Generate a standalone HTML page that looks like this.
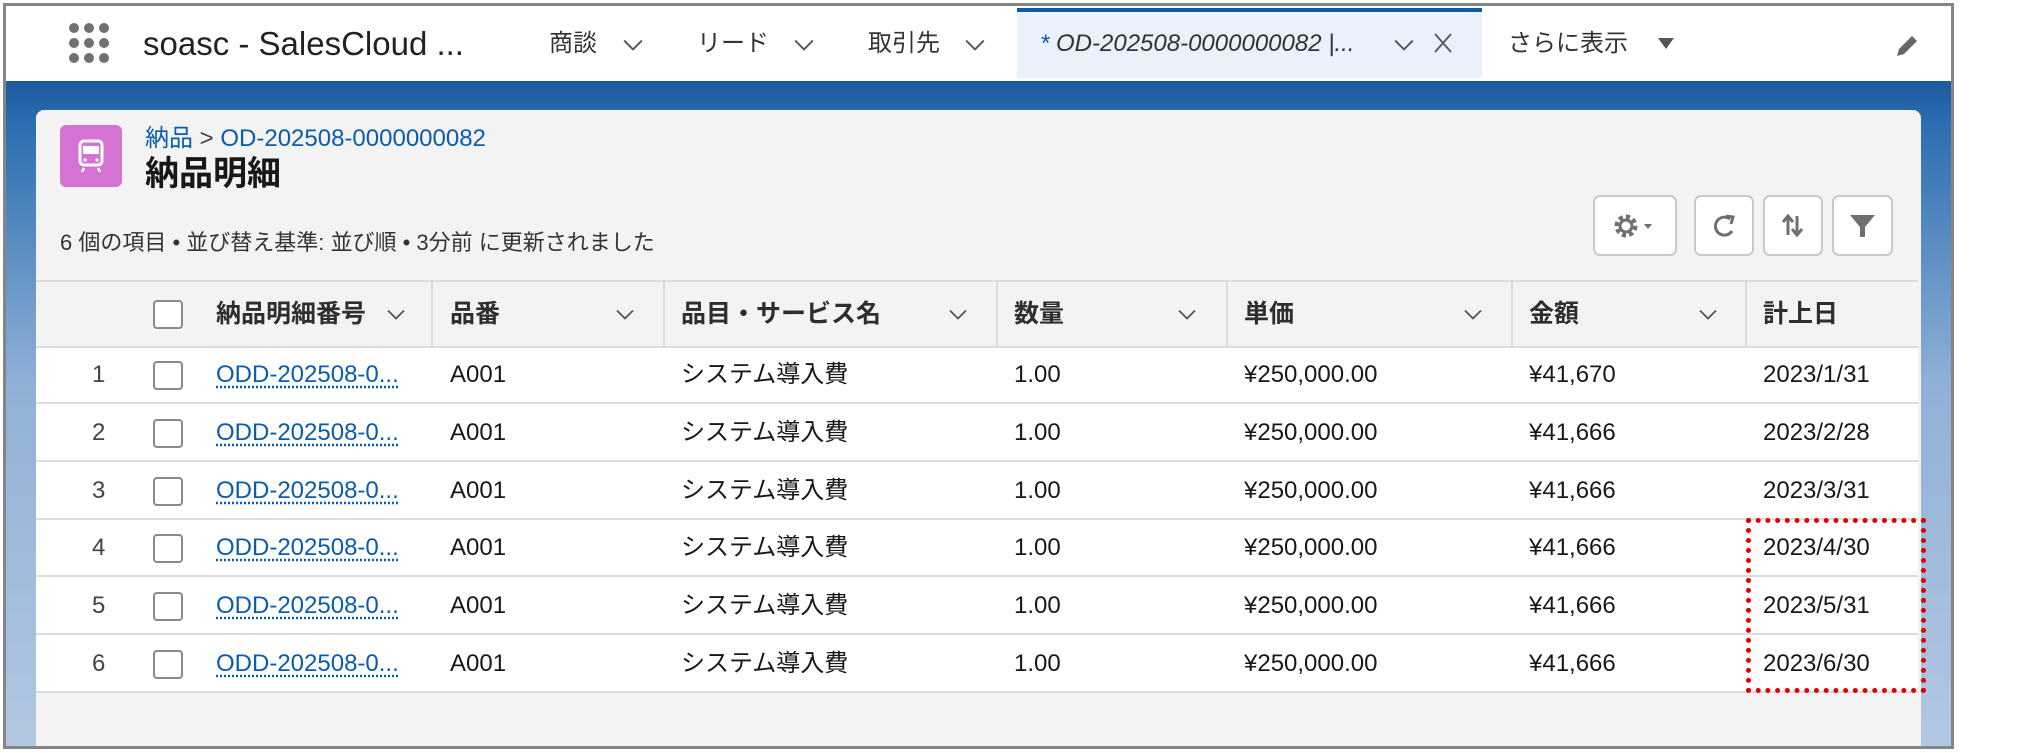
<!DOCTYPE html>
<html><head><meta charset="utf-8"><style>
*{margin:0;padding:0;box-sizing:border-box}
body{width:2027px;height:753px;background:#fff;position:relative;overflow:hidden;font-family:"Liberation Sans","Noto Sans CJK JP",sans-serif;color:#181818}
.a{position:absolute;line-height:1}
.frame{left:3px;top:3px;width:1951px;height:746px;border:3px solid #858585;background:#fff;overflow:hidden}
.nav{left:0;top:0;width:1945px;height:75px;background:#fff}
.blue{left:0;top:75px;width:1945px;height:680px;background:linear-gradient(#1b5a9c 0,#2a6db0 40px,#8fb0d6 300px,#b3c8e2 680px)}
.card{left:30px;top:104px;width:1885px;height:650px;background:#f3f3f3;border-radius:8px 8px 0 0}
.t{font-size:24px;white-space:nowrap;line-height:24px}
.hd{font-size:25px;font-weight:bold;color:#2e2e2e;line-height:25px;white-space:nowrap}
.cb{width:30px;height:29px;border:2px solid #8a8a8a;border-radius:4px;background:#fff}
.btn{border:2px solid #c9c9c9;border-radius:7px;background:#fff;height:61px;top:195px}
.hl{height:2px;background:#dcdcdc;left:36px;width:1882px}
.vl{width:2px;background:#dcdcdc;top:282px;height:64px}
.lk{color:#0b5cab;text-decoration:underline dotted #0b5cab;text-underline-offset:4px}
.nt{font-size:24px;color:#333;white-space:nowrap;line-height:24px}
</style></head><body>
<svg width="0" height="0" style="position:absolute"><defs><symbol id="cv" viewBox="0 0 20 12"><path d="M2 2 L10 10 L18 2" fill="none" stroke="#555" stroke-width="1.8"/></symbol></defs></svg>
<div class="a frame">
 <div class="a nav"></div>
 <div class="a blue"></div>
 <div class="a card"></div>
</div>
<!-- nav -->
<svg class="a" style="left:68px;top:22px" width="44" height="42"><g fill="#707070">
<circle cx="6" cy="6" r="5"/><circle cx="21" cy="6" r="5"/><circle cx="36" cy="6" r="5"/>
<circle cx="6" cy="21" r="5"/><circle cx="21" cy="21" r="5"/><circle cx="36" cy="21" r="5"/>
<circle cx="6" cy="36" r="5"/><circle cx="21" cy="36" r="5"/><circle cx="36" cy="36" r="5"/></g></svg>
<div class="a" style="left:143px;top:27px;font-size:33px;color:#222;white-space:nowrap">soasc - SalesCloud ...</div>
<div class="a nt" style="left:549px;top:32px">商談</div><svg class="a" style="left:622px;top:38px" width="22" height="14"><use href="#cv"/></svg>
<div class="a nt" style="left:697px;top:32px">リード</div><svg class="a" style="left:793px;top:38px" width="22" height="14"><use href="#cv"/></svg>
<div class="a nt" style="left:868px;top:32px">取引先</div><svg class="a" style="left:964px;top:38px" width="22" height="14"><use href="#cv"/></svg>
<div class="a" style="left:1017px;top:8px;width:465px;height:70px;background:#e9f1fb;border-top:4px solid #0b5cab"></div>
<div class="a nt" style="left:1040px;top:32px;font-style:italic"><span style="color:#0b5cab">*</span> OD-202508-0000000082 |...</div>
<svg class="a" style="left:1393px;top:38px" width="22" height="14"><use href="#cv"/></svg>
<svg class="a" style="left:1433px;top:32px" width="20" height="22"><path d="M2 2 L18 20 M18 2 L2 20" stroke="#555" stroke-width="1.8"/></svg>
<div class="a nt" style="left:1508px;top:32px">さらに表示</div>
<svg class="a" style="left:1658px;top:38px" width="16" height="12"><path d="M0 0 H16 L8 11 Z" fill="#555"/></svg>
<svg class="a" style="left:1893px;top:32px" width="28" height="28"><path d="M4 24 L6 17 L19 4 L24 9 L11 22 Z" fill="#666"/></svg>
<!-- header -->
<div class="a" style="left:60px;top:125px;width:62px;height:62px;background:#d473d4;border-radius:6px"></div>
<svg class="a" style="left:60px;top:125px" width="62" height="62"><rect x="20" y="16" width="22" height="24" rx="4" fill="none" stroke="#fff" stroke-width="3"/><rect x="23" y="21" width="16" height="8" fill="#fff"/><circle cx="25" cy="35" r="1.6" fill="#fff"/><circle cx="37" cy="35" r="1.6" fill="#fff"/><path d="M24 43 L22 47 M38 43 L40 47" stroke="#fff" stroke-width="2.5"/></svg>
<div class="a" style="left:145px;top:127px;font-size:24px;color:#0b5cab;white-space:nowrap">納品 <span style="color:#444">&gt;</span> OD-202508-0000000082</div>
<div class="a" style="left:145px;top:157px;font-size:34px;font-weight:bold;color:#181818">納品明細</div>
<div class="a" style="left:60px;top:232px;font-size:22px;color:#333;white-space:nowrap">6 個の項目 • 並び替え基準: 並び順 • 3分前 に更新されました</div>
<div class="a btn" style="left:1593px;width:84px"></div>
<div class="a btn" style="left:1694px;width:60px"></div>
<div class="a btn" style="left:1763px;width:60px"></div>
<div class="a btn" style="left:1832px;width:61px"></div>
<svg class="a" style="left:1593px;top:195px" width="84" height="61"><circle cx="33" cy="31" r="9" fill="none" stroke="#707070" stroke-width="5" stroke-dasharray="4 3"/><circle cx="33" cy="31" r="6" fill="none" stroke="#707070" stroke-width="3"/><path d="M51 29 L59 29 L55 34 Z" fill="#707070"/></svg>
<svg class="a" style="left:1694px;top:195px" width="60" height="61"><path d="M36 24 A9 9 0 1 0 38 36" fill="none" stroke="#707070" stroke-width="3"/><path d="M32 21 L39 22 L37 29" fill="none" stroke="#707070" stroke-width="3"/></svg>
<svg class="a" style="left:1763px;top:195px" width="60" height="61"><path d="M25 40 V22 M20 27 L25 21 L30 27 M34 21 V39 M29 34 L34 40 L39 34" fill="none" stroke="#707070" stroke-width="3"/></svg>
<svg class="a" style="left:1832px;top:195px" width="61" height="61"><path d="M18 20 H43 L33 32 V42 H28 V32 Z" fill="#707070"/></svg>
<!-- table -->
<div class="a" style="left:36px;top:282px;width:1882px;height:410px;background:#fff"></div>
<div class="a" style="left:36px;top:282px;width:1882px;height:64px;background:#f3f3f3"></div>
<div class="a hl" style="top:280px"></div>
<div class="a hl" style="top:346px"></div>
<div class="a hl" style="top:402px"></div>
<div class="a hl" style="top:460px"></div>
<div class="a hl" style="top:518px"></div>
<div class="a hl" style="top:575px"></div>
<div class="a hl" style="top:633px"></div>
<div class="a hl" style="top:691px"></div>
<div class="a vl" style="left:431px"></div>
<div class="a vl" style="left:663px"></div>
<div class="a vl" style="left:996px"></div>
<div class="a vl" style="left:1226px"></div>
<div class="a vl" style="left:1511px"></div>
<div class="a vl" style="left:1745px"></div>
<div class="a cb" style="left:153px;top:300px"></div>
<div class="a hd" style="left:216px;top:302px">納品明細番号</div><svg class="a" style="left:386px;top:308px" width="20" height="13"><use href="#cv"/></svg>
<div class="a hd" style="left:450px;top:302px">品番</div><svg class="a" style="left:615px;top:308px" width="20" height="13"><use href="#cv"/></svg>
<div class="a hd" style="left:681px;top:302px">品目・サービス名</div><svg class="a" style="left:948px;top:308px" width="20" height="13"><use href="#cv"/></svg>
<div class="a hd" style="left:1014px;top:302px">数量</div><svg class="a" style="left:1177px;top:308px" width="20" height="13"><use href="#cv"/></svg>
<div class="a hd" style="left:1244px;top:302px">単価</div><svg class="a" style="left:1463px;top:308px" width="20" height="13"><use href="#cv"/></svg>
<div class="a hd" style="left:1529px;top:302px">金額</div><svg class="a" style="left:1698px;top:308px" width="20" height="13"><use href="#cv"/></svg>
<div class="a hd" style="left:1763px;top:302px">計上日</div>

<div class="a t" style="left:92px;top:363px;color:#444">1</div><div class="a cb" style="left:153px;top:361px"></div><div class="a t lk" style="left:216px;top:363px">ODD-202508-0...</div><div class="a t" style="left:450px;top:363px">A001</div><div class="a t" style="left:681px;top:363px">システム導入費</div><div class="a t" style="left:1014px;top:363px">1.00</div><div class="a t" style="left:1244px;top:363px">¥250,000.00</div><div class="a t" style="left:1529px;top:363px">¥41,670</div><div class="a t" style="left:1763px;top:363px">2023/1/31</div>
<div class="a t" style="left:92px;top:421px;color:#444">2</div><div class="a cb" style="left:153px;top:419px"></div><div class="a t lk" style="left:216px;top:421px">ODD-202508-0...</div><div class="a t" style="left:450px;top:421px">A001</div><div class="a t" style="left:681px;top:421px">システム導入費</div><div class="a t" style="left:1014px;top:421px">1.00</div><div class="a t" style="left:1244px;top:421px">¥250,000.00</div><div class="a t" style="left:1529px;top:421px">¥41,666</div><div class="a t" style="left:1763px;top:421px">2023/2/28</div>
<div class="a t" style="left:92px;top:479px;color:#444">3</div><div class="a cb" style="left:153px;top:477px"></div><div class="a t lk" style="left:216px;top:479px">ODD-202508-0...</div><div class="a t" style="left:450px;top:479px">A001</div><div class="a t" style="left:681px;top:479px">システム導入費</div><div class="a t" style="left:1014px;top:479px">1.00</div><div class="a t" style="left:1244px;top:479px">¥250,000.00</div><div class="a t" style="left:1529px;top:479px">¥41,666</div><div class="a t" style="left:1763px;top:479px">2023/3/31</div>
<div class="a t" style="left:92px;top:536px;color:#444">4</div><div class="a cb" style="left:153px;top:534px"></div><div class="a t lk" style="left:216px;top:536px">ODD-202508-0...</div><div class="a t" style="left:450px;top:536px">A001</div><div class="a t" style="left:681px;top:536px">システム導入費</div><div class="a t" style="left:1014px;top:536px">1.00</div><div class="a t" style="left:1244px;top:536px">¥250,000.00</div><div class="a t" style="left:1529px;top:536px">¥41,666</div><div class="a t" style="left:1763px;top:536px">2023/4/30</div>
<div class="a t" style="left:92px;top:594px;color:#444">5</div><div class="a cb" style="left:153px;top:592px"></div><div class="a t lk" style="left:216px;top:594px">ODD-202508-0...</div><div class="a t" style="left:450px;top:594px">A001</div><div class="a t" style="left:681px;top:594px">システム導入費</div><div class="a t" style="left:1014px;top:594px">1.00</div><div class="a t" style="left:1244px;top:594px">¥250,000.00</div><div class="a t" style="left:1529px;top:594px">¥41,666</div><div class="a t" style="left:1763px;top:594px">2023/5/31</div>
<div class="a t" style="left:92px;top:652px;color:#444">6</div><div class="a cb" style="left:153px;top:650px"></div><div class="a t lk" style="left:216px;top:652px">ODD-202508-0...</div><div class="a t" style="left:450px;top:652px">A001</div><div class="a t" style="left:681px;top:652px">システム導入費</div><div class="a t" style="left:1014px;top:652px">1.00</div><div class="a t" style="left:1244px;top:652px">¥250,000.00</div><div class="a t" style="left:1529px;top:652px">¥41,666</div><div class="a t" style="left:1763px;top:652px">2023/6/30</div>
<div class="a" style="left:1746px;top:518px;width:180px;height:175px;border:5px dotted #e00000"></div>
</body></html>
